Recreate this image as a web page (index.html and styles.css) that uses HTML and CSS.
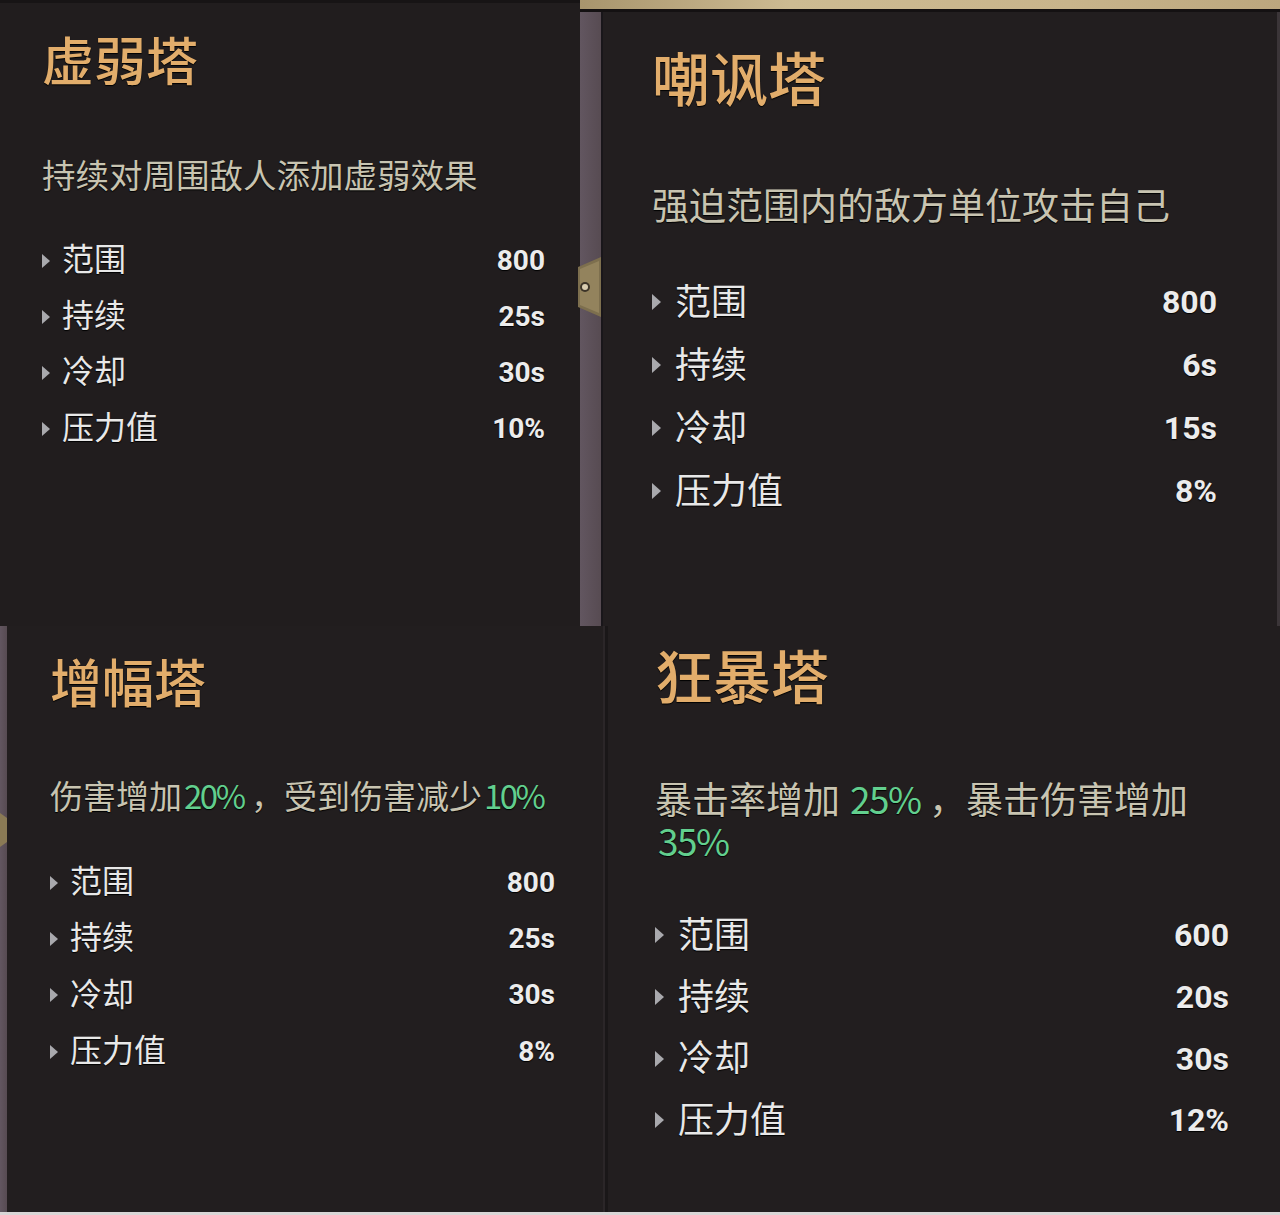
FILE: index.html
```html
<!DOCTYPE html>
<html lang="zh-CN">
<head>
<meta charset="utf-8">
<title>塔</title>
<link rel="stylesheet" href="styles.css">
</head>
<body>
<div class="sheet">
  <div class="row row-top">
    <section class="card card-tl">
      <h2 class="title">虚弱塔</h2>
      <p class="desc">持续对周围敌人添加虚弱效果</p>
      <ul class="stats">
        <li><span class="arrow"></span><span class="label">范围</span><span class="val">800</span></li>
        <li><span class="arrow"></span><span class="label">持续</span><span class="val">25s</span></li>
        <li><span class="arrow"></span><span class="label">冷却</span><span class="val">30s</span></li>
        <li><span class="arrow"></span><span class="label">压力值</span><span class="val">10%</span></li>
      </ul>
    </section>
    <div class="frame-tr">
      <div class="tan-bar"></div>
      <div class="frame-body">
        <div class="strip strip-tr">
          <svg class="badge-tr" width="26" height="60" viewBox="0 0 26 60"><polygon points="0,10 23,0 23,60 0,50" fill="#7d6f4e"/><polygon points="2,12 21,4 21,56 2,48" fill="#93835d"/><circle cx="7" cy="30" r="5" fill="#3c3428"/><circle cx="7" cy="30" r="3" fill="#d8ccb0"/></svg>
        </div>
        <section class="card card-tr">
          <h2 class="title">嘲讽塔</h2>
          <p class="desc">强迫范围内的敌方单位攻击自己</p>
          <ul class="stats">
            <li><span class="arrow"></span><span class="label">范围</span><span class="val">800</span></li>
            <li><span class="arrow"></span><span class="label">持续</span><span class="val">6s</span></li>
            <li><span class="arrow"></span><span class="label">冷却</span><span class="val">15s</span></li>
            <li><span class="arrow"></span><span class="label">压力值</span><span class="val">8%</span></li>
          </ul>
        </section>
      </div>
    </div>
  </div>
  <div class="row row-bottom">
    <div class="strip strip-bl">
      <svg class="badge-bl" width="7" height="34" viewBox="0 0 7 34"><polygon points="0,0 7,5 7,29 0,34" fill="#8a7a55"/></svg>
    </div>
    <section class="card card-bl">
      <h2 class="title">增幅塔</h2>
      <p class="desc">伤害增加<span class="hl">20%</span> ，受到伤害减少<span class="hl">10%</span></p>
      <ul class="stats">
        <li><span class="arrow"></span><span class="label">范围</span><span class="val">800</span></li>
        <li><span class="arrow"></span><span class="label">持续</span><span class="val">25s</span></li>
        <li><span class="arrow"></span><span class="label">冷却</span><span class="val">30s</span></li>
        <li><span class="arrow"></span><span class="label">压力值</span><span class="val">8%</span></li>
      </ul>
    </section>
    <div class="divider"></div>
    <section class="card card-br">
      <h2 class="title">狂暴塔</h2>
      <p class="desc">暴击率增加<span class="hl hl-gap">25%</span> ，暴击伤害增加<span class="hl">35%</span></p>
      <ul class="stats">
        <li><span class="arrow"></span><span class="label">范围</span><span class="val">600</span></li>
        <li><span class="arrow"></span><span class="label">持续</span><span class="val">20s</span></li>
        <li><span class="arrow"></span><span class="label">冷却</span><span class="val">30s</span></li>
        <li><span class="arrow"></span><span class="label">压力值</span><span class="val">12%</span></li>
      </ul>
    </section>
  </div>
  <div class="bottom-line"></div>
</div>
</body>
</html>
```

FILE: styles.css
```css
* { box-sizing: border-box; }
html, body { margin: 0; padding: 0; background: #221e1f; }
body { font-family: "Noto Sans CJK SC", "Noto Sans", sans-serif; }

.sheet { width: 1280px; height: 1215px; display: flex; flex-direction: column; overflow: hidden; }
.row { display: flex; }
.row-top { height: 626px; }
.row-bottom { height: 586px; }
.bottom-line { height: 3px; background: #d9d6d6; }

.card { background: #221e1f; display: flex; flex-direction: column; }
.title { margin: 0; font-weight: 500; color: #e2ad6b; text-shadow: 0 1px 1px #000; white-space: nowrap; }
.desc { margin: 0; color: #c8c4b1; text-shadow: 0 1px 1px #000; }
.hl { color: #62cf8e; display: inline-block; line-height: inherit; margin-left: 3px; letter-spacing: -1.5px; }
.hl-gap { margin-left: 10px; }
.stats { list-style: none; margin: 0; padding: 0; }
.stats li { display: flex; align-items: center; }
.arrow { width: 0; height: 0; border-top: 7px solid transparent; border-bottom: 7px solid transparent; border-left: 8px solid #a9a9ad; flex: none; margin-top: 7px; }
.label { color: #e8e8e8; line-height: 1; text-shadow: 0 1px 1px #000; }
.val { margin-left: auto; padding-top: 7px; font-family: Roboto, "Liberation Sans", sans-serif; font-weight: 700; color: #ececec; line-height: 1; text-shadow: 0 1px 1px #000; }

/* top-left */
.card-tl { width: 580px; padding: 33px 35px 0 42px; background: #211d1e; border-top: 3px solid #171415; }
.card-tl .title { font-size: 52px; line-height: 52px; margin-top: -3px; }
.card-tl .desc { font-size: 33.5px; line-height: 33px; margin-top: 72px; }
.card-tl .stats { margin-top: 39px; }
.card-tl .stats li { height: 56px; }
.card-tl .arrow { margin-right: 12px; }
.card-tl .label { font-size: 32px; }
.card-tl .val { font-size: 28px; }

/* top-right frame */
.frame-tr { flex: 1; display: flex; flex-direction: column; }
.tan-bar { height: 9px; background: linear-gradient(to right, #a8956d, #cdbb92 30%, #c8b48b 70%, #bca77e); }
.frame-body { flex: 1; display: flex; border-top: 3px solid #141112; }
.strip { background: linear-gradient(to right, #625660, #574b52); flex: none; }
.strip-tr { width: 21px; border-right: 2px solid #19161a; box-sizing: content-box; padding-top: 245px; }
.badge-tr { display: block; margin-left: -2px; }
.card-tr { flex: 1; padding: 35px 60px 0 49px; border-right: 3px solid #3b3538; }
.card-tr .title { font-size: 58px; line-height: 58px; }
.card-tr .desc { font-size: 37px; line-height: 42px; margin-top: 78px; }
.card-tr .stats { margin-top: 42px; }
.card-tr .stats li { height: 63px; }
.card-tr .arrow { margin-right: 14px; border-top-width: 8px; border-bottom-width: 8px; border-left-width: 9px; }
.card-tr .label { font-size: 36px; }
.card-tr .val { font-size: 32px; }

/* bottom-left */
.strip-bl { width: 7px; padding-top: 187px; }
.badge-bl { display: block; }
.card-bl { width: 596px; padding: 29px 48px 0 43px; }
.card-bl .title { font-size: 52px; line-height: 52px; }
.card-bl .desc { font-size: 33px; line-height: 33px; margin-top: 72px; white-space: nowrap; }
.card-bl .hl { letter-spacing: -2.5px; margin-left: 2px; }
.card-bl .stats { margin-top: 39px; }
.card-bl .stats li { height: 56.3px; }
.card-bl .arrow { margin-right: 12px; }
.card-bl .label { font-size: 32px; }
.card-bl .val { font-size: 28px; }

.divider { width: 5px; background: #1a1718; border-left: 2px solid #2b2628; }

/* bottom-right */
.card-br { flex: 1; padding: 19px 51px 0 47px; }
.card-br .title { font-size: 58px; line-height: 58px; }
.card-br .desc { font-size: 37px; line-height: 42px; margin-top: 74px; }
.card-br .stats { margin-top: 40px; }
.card-br .stats li { height: 61.7px; }
.card-br .arrow { margin-right: 14px; border-top-width: 8px; border-bottom-width: 8px; border-left-width: 9px; }
.card-br .label { font-size: 36px; }
.card-br .val { font-size: 32px; }
```
